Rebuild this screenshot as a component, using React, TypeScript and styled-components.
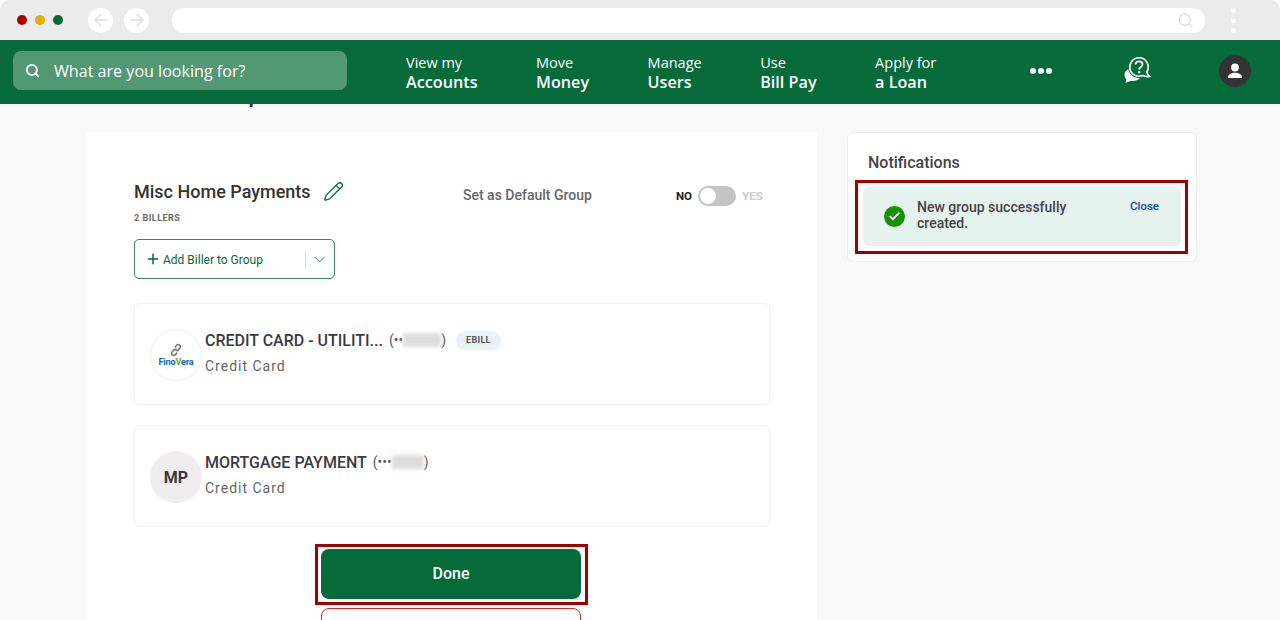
import React from 'react'
import styled, { createGlobalStyle } from 'styled-components'
import { ArrowLeft, ArrowRight, Check, ChevronDown, Pencil, Plus, Search } from 'lucide-react'

const GREEN = '#066a3a'

const GlobalStyle = createGlobalStyle`
    html, body {
        margin: 0;
        height: 620px;
        overflow: hidden;
        background: #fff;
        font-family: Roboto, "Liberation Sans", sans-serif;
    }
    * { box-sizing: border-box; }
`

interface BillerProps {
    name: string;
    dots: string;
    maskWidth: number;
    ebill?: boolean;
    avatar: React.ReactNode;
    plain?: boolean;
}

function Biller({ name, dots, maskWidth, ebill, avatar, plain }: BillerProps) {
    return (
        <BillerCard>
            <Avatar $plain={plain}>{avatar}</Avatar>
            <BillerInfo>
                <BillerTitle>
                    <BillerName>{name}</BillerName>
                    <Account>
                        ({dots}<Mask style={{ width: maskWidth }} />)
                    </Account>
                    {ebill && <Badge>EBILL</Badge>}
                </BillerTitle>
                <BillerType>Credit Card</BillerType>
            </BillerInfo>
        </BillerCard>
    )
}

export default function App() {
    return (
        <Page>
            <GlobalStyle />
            <BrowserBar>
                <Dots>
                    <Dot $color="#a80000" />
                    <Dot $color="#e0b000" />
                    <Dot $color={GREEN} />
                </Dots>
                <RoundNav><ArrowLeft size={20} strokeWidth={1.6} /></RoundNav>
                <RoundNav><ArrowRight size={20} strokeWidth={1.6} /></RoundNav>
                <UrlBar><Search size={17} strokeWidth={1.8} color="#ddd" /></UrlBar>
                <Kebab><i /><i /><i /></Kebab>
            </BrowserBar>

            <Header>
                <SearchBox>
                    <Search size={15} strokeWidth={3.2} color="#fff" />
                    <span>What are you looking for?</span>
                </SearchBox>
                <Nav>
                    <NavItem><span>View my</span><strong>Accounts</strong></NavItem>
                    <NavItem><span>Move</span><strong>Money</strong></NavItem>
                    <NavItem><span>Manage</span><strong>Users</strong></NavItem>
                    <NavItem><span>Use</span><strong>Bill Pay</strong></NavItem>
                    <NavItem><span>Apply for</span><strong>a Loan</strong></NavItem>
                </Nav>
                <MoreDots><i /><i /><i /></MoreDots>
                <HelpIcon viewBox="0 0 28 28" width="28" height="28">
                    <path d="M6 12.500C2.500 13.500.5 16 .5 19c0 1.800.8 3.300 2 4.400L1.500 27l5.300-2.200c3 .6 6.500-.1 9-2.200z" fill="#fff" />
                    <circle cx="15" cy="11" r="11" fill={GREEN} />
                    <path d="M15 1.800a9.200 9.200 0 1 0 3.500 17.700c2.300.9 5 1.300 7 .9-1.300-1-2.100-2.300-2.700-4.400A9.200 9.200 0 0 0 15 1.800z" fill={GREEN} stroke="#fff" strokeWidth="1.600" />
                    <path d="M11.500 8.500c.2-2 1.700-3.200 3.600-3.200 2 0 3.400 1.300 3.400 3 0 2.700-3.300 2.700-3.300 5.200" fill="none" stroke="#fff" strokeWidth="1.800" />
                    <circle cx="15.200" cy="16.300" r="1.200" fill="#fff" />
                </HelpIcon>
                <UserAvatar>
                    <svg viewBox="0 0 20 20" width="20" height="20">
                        <circle cx="10" cy="6.500" r="3.900" fill="#fff" />
                        <path d="M3 16.500c0-3.200 3.500-4.700 7-4.700s7 1.500 7 4.700V17H3z" fill="#fff" />
                    </svg>
                </UserAvatar>
            </Header>

            <Body>
                <MainColumn>
                    <PageTitle>Biller Group</PageTitle>
                    <MainCard>
                        <TopRow>
                            <GroupHead>
                                <GroupName>
                                    Misc Home Payments
                                    <Pencil size={21} strokeWidth={1.5} color={GREEN} />
                                </GroupName>
                                <BillerCount>2 BILLERS</BillerCount>
                            </GroupHead>
                            <DefaultLabel>Set as Default Group</DefaultLabel>
                            <ToggleRow>
                                <ToggleText $on>NO</ToggleText>
                                <Toggle><Knob /></Toggle>
                                <ToggleText>YES</ToggleText>
                            </ToggleRow>
                        </TopRow>

                        <AddButton>
                            <Plus size={16} strokeWidth={2.2} />
                            <AddLabel>Add Biller to Group</AddLabel>
                            <AddDivider />
                            <ChevronDown size={19} strokeWidth={1.1} />
                        </AddButton>

                        <BillerList>
                            <Biller
                                name="CREDIT CARD - UTILITI..."
                                dots="••"
                                maskWidth={38}
                                ebill
                                avatar={
                                    <LogoWrap>
                                        <svg viewBox="0 0 14 14" width="14" height="14" fill="none" stroke="#777" strokeWidth="1.500">
                                            <path d="M6 4.500l1.500-2a2 2 0 0 1 3.500 2.300L9.500 6.800a2 2 0 0 1-2.800.3" />
                                            <path d="M8 9.500l-1.500 2A2 2 0 0 1 3 9.200l1.500-2a2 2 0 0 1 2.800-.3" />
                                        </svg>
                                        <LogoText>Fino<em>V</em>era</LogoText>
                                    </LogoWrap>
                                }
                            />
                            <Biller name="MORTGAGE PAYMENT" dots="•••" maskWidth={32} avatar="MP" plain />
                        </BillerList>

                        <Actions>
                            <DoneButton type="button">Done</DoneButton>
                            <OutlineButton type="button" />
                        </Actions>
                    </MainCard>
                </MainColumn>

                <SideCard>
                    <SideTitle>Notifications</SideTitle>
                    <Alert>
                        <AlertIcon><Check size={13} strokeWidth={3.2} color="#fff" /></AlertIcon>
                        <AlertText>New group successfully created.</AlertText>
                        <CloseLink>Close</CloseLink>
                    </Alert>
                </SideCard>
            </Body>
        </Page>
    )
}

const Page = styled.div`
    width: 1280px;
    height: 620px;
    overflow: hidden;
    background: #f9f9f9;
    display: flex;
    flex-direction: column;
`

const BrowserBar = styled.div`
    flex: none;
    height: 40px;
    display: flex;
    align-items: center;
    padding: 0 0 0 17px;
    background: #ebebeb;
    border-radius: 10px 10px 0 0;
`
const Dots = styled.div`
    display: flex;
    gap: 8px;
    margin-right: 25px;
`
const Dot = styled.span<{ $color: string }>`
    width: 10px;
    height: 10px;
    border-radius: 50%;
    background: ${p => p.$color};
`
const RoundNav = styled.div`
    width: 25px;
    height: 25px;
    margin-right: 11px;
    border-radius: 50%;
    background: #fff;
    color: #ddd;
    display: flex;
    align-items: center;
    justify-content: center;
`
const UrlBar = styled.div`
    width: 1033px;
    height: 25px;
    margin-left: 12px;
    padding-right: 11px;
    border-radius: 12px;
    background: #fff;
    display: flex;
    align-items: center;
    justify-content: flex-end;
`
const Kebab = styled.div`
    margin-left: 26px;
    display: flex;
    flex-direction: column;
    gap: 5px;
    i {
        width: 5px;
        height: 5px;
        border-radius: 50%;
        background: #fafafa;
    }
`

const Header = styled.header`
    flex: none;
    position: relative;
    z-index: 2;
    height: 64px;
    padding: 0 29px 3px 13px;
    display: flex;
    align-items: center;
    background: ${GREEN};
    font-family: "Open Sans", "Liberation Sans", sans-serif;
    color: #fff;
`
const SearchBox = styled.div`
    width: 334px;
    height: 39px;
    padding-left: 12px;
    border-radius: 8px;
    background: #529874;
    display: flex;
    align-items: center;
    gap: 14px;
    font-size: 16.1px;
`
const Nav = styled.nav`
    display: flex;
    gap: 58.5px;
    margin-left: 59px;
    padding-top: 4px;
`
const NavItem = styled.a`
    display: flex;
    flex-direction: column;
    font-size: 14.5px;
    line-height: 19px;
    strong {
        margin-top: 1px;
        font-size: 16.2px;
        font-weight: 600;
    }
`
const MoreDots = styled.div`
    margin-left: 94px;
    display: flex;
    gap: 2px;
    i {
        width: 6px;
        height: 6px;
        border-radius: 50%;
        background: #fff;
    }
`
const HelpIcon = styled.svg`
    margin-left: 72px;
    margin-bottom: 2px;
`
const UserAvatar = styled.div`
    margin-left: auto;
    width: 32px;
    height: 32px;
    border-radius: 50%;
    background: #333;
    display: flex;
    align-items: center;
    justify-content: center;
`

const Body = styled.main`
    flex: 1;
    min-height: 0;
    padding: 0 0 0 86px;
    display: flex;
    gap: 30px;
    align-items: flex-start;
    overflow: hidden;
`
const MainColumn = styled.div`
    width: 731px;
`
const PageTitle = styled.h1`
    height: 28px;
    margin: -24px 0 24px 50px;
    font-size: 24px;
    line-height: 28px;
    font-weight: 500;
    color: #333;
`
const MainCard = styled.section`
    padding: 48px 47px 0 48px;
    background: #fff;
    height: 600px;
`
const TopRow = styled.div`
    display: flex;
    align-items: flex-start;
`
const GroupHead = styled.div`
    width: 329px;
`
const GroupName = styled.div`
    display: flex;
    align-items: center;
    gap: 12px;
    height: 26px;
    margin-top: -2px;
    font-size: 18px;
    font-weight: 500;
    color: #333;
`
const BillerCount = styled.div`
    margin-top: 8px;
    font-size: 9px;
    line-height: 12px;
    font-weight: 700;
    letter-spacing: .5px;
    color: #666;
`
const DefaultLabel = styled.div`
    width: 213px;
    margin-top: 6px;
    font-size: 14px;
    line-height: 18px;
    font-weight: 500;
    color: #666;
`
const ToggleRow = styled.div`
    display: flex;
    align-items: center;
    gap: 6px;
    margin-top: 6px;
`
const Toggle = styled.div`
    width: 38px;
    height: 20px;
    padding: 2px;
    border-radius: 10px;
    background: #c4c4c4;
`
const Knob = styled.div`
    width: 16px;
    height: 16px;
    border-radius: 50%;
    background: #fff;
`
const ToggleText = styled.span<{ $on?: boolean }>`
    font-size: 11.5px;
    font-weight: 700;
    color: ${p => (p.$on ? '#222' : '#ccc')};
`

const AddButton = styled.button`
    width: 201px;
    height: 40px;
    margin-top: 15px;
    padding: 0 5px 0 10px;
    display: flex;
    align-items: center;
    background: #fff;
    border: 1.5px solid #3b8562;
    border-radius: 5px;
    color: ${GREEN};
    font-family: inherit;
`
const AddLabel = styled.span`
    margin: 1px 0 0 2px;
    font-size: 12px;
    font-weight: 400;
`
const AddDivider = styled.span`
    width: 1px;
    height: 18px;
    margin: 0 4px 0 auto;
    background: #ddd;
`

const BillerList = styled.div`
    margin-top: 24px;
    display: flex;
    flex-direction: column;
    gap: 20px;
`
const BillerCard = styled.article`
    height: 102px;
    padding: 25px 15px;
    display: flex;
    gap: 3px;
    background: #fff;
    border: 1px solid #f0f0f0;
    border-radius: 6px;
`
const Avatar = styled.div<{ $plain?: boolean }>`
    flex: none;
    width: 52px;
    height: 52px;
    border-radius: 50%;
    display: flex;
    align-items: center;
    justify-content: center;
    background: ${p => (p.$plain ? '#efeded' : '#fff')};
    border: ${p => (p.$plain ? 'none' : '1px solid #eee')};
    font-size: 16px;
    font-weight: 700;
    color: #3a3a40;
`
const LogoWrap = styled.div`
    display: flex;
    flex-direction: column;
    align-items: center;
    margin-top: -1px;
`
const LogoText = styled.span`
    font-size: 9.2px;
    line-height: 10px;
    font-weight: 700;
    letter-spacing: -.2px;
    color: #0b6bb5;
    em {
        font-style: normal;
        color: #5cae2e;
    }
`
const BillerInfo = styled.div`
    padding-top: 1px;
`
const BillerTitle = styled.div`
    display: flex;
    align-items: center;
    height: 20px;
`
const BillerName = styled.span`
    font-size: 16px;
    font-weight: 500;
    color: #3a3a40;
`
const Account = styled.span`
    display: flex;
    align-items: center;
    margin-left: 6px;
    font-size: 14px;
    color: #555;
`
const Mask = styled.span`
    display: inline-block;
    height: 14px;
    background: #ddd;
    filter: blur(2px);
`
const Badge = styled.span`
    height: 19px;
    margin-left: 10px;
    padding: 0 10px;
    display: flex;
    align-items: center;
    border-radius: 10px;
    background: #e8f2fb;
    font-size: 9px;
    font-weight: 700;
    letter-spacing: .3px;
    color: #555;
`
const BillerType = styled.div`
    margin-top: 7px;
    font-size: 14px;
    line-height: 18px;
    letter-spacing: 1px;
    color: #666;
`

const Actions = styled.div`
    margin-top: 22px;
    padding-right: 2px;
    display: flex;
    flex-direction: column;
    align-items: center;
    gap: 9px;
`
const DoneButton = styled.button`
    position: relative;
    width: 260px;
    height: 50px;
    padding-bottom: 3px;
    border: none;
    border-radius: 8px;
    background: ${GREEN};
    color: #fff;
    font-family: inherit;
    font-size: 16px;
    font-weight: 500;

    &::after {
        content: '';
        position: absolute;
        inset: -5px -7px -6px -6px;
        border: 3px solid #a00000;
    }
`
const OutlineButton = styled.button`
    flex: none;
    width: 260px;
    height: 50px;
    border: 1px solid #d42a2a;
    border-radius: 8px;
    background: #fff;
`

const SideCard = styled.aside`
    width: 350px;
    height: 130px;
    margin-top: 28px;
    padding: 20px 15px 0 15px;
    background: #fff;
    border: 1px solid #eee;
    border-radius: 6px;
`
const SideTitle = styled.h2`
    margin: 0 0 0 5px;
    font-size: 16px;
    line-height: 19px;
    font-weight: 500;
    color: #444;
`
const Alert = styled.div`
    position: relative;
    height: 59px;
    margin-top: 15px;
    padding: 12px 22px 0 21px;
    display: flex;
    align-items: flex-start;
    background: #e5f2ed;
    border-radius: 6px;

    &::after {
        content: '';
        position: absolute;
        inset: -7px -7px -8px -8px;
        border: 3px solid #a00000;
    }
`
const AlertIcon = styled.span`
    flex: none;
    width: 21px;
    height: 21px;
    margin: 7px 12px 0 0;
    border-radius: 50%;
    background: #1a8f0a;
    display: flex;
    align-items: center;
    justify-content: center;
`
const AlertText = styled.div`
    width: 172px;
    font-size: 14px;
    line-height: 16px;
    font-weight: 500;
    color: #444;
`
const CloseLink = styled.a`
    margin-left: auto;
    font-size: 11.5px;
    line-height: 14px;
    font-weight: 500;
    color: #0a4a8a;
`
